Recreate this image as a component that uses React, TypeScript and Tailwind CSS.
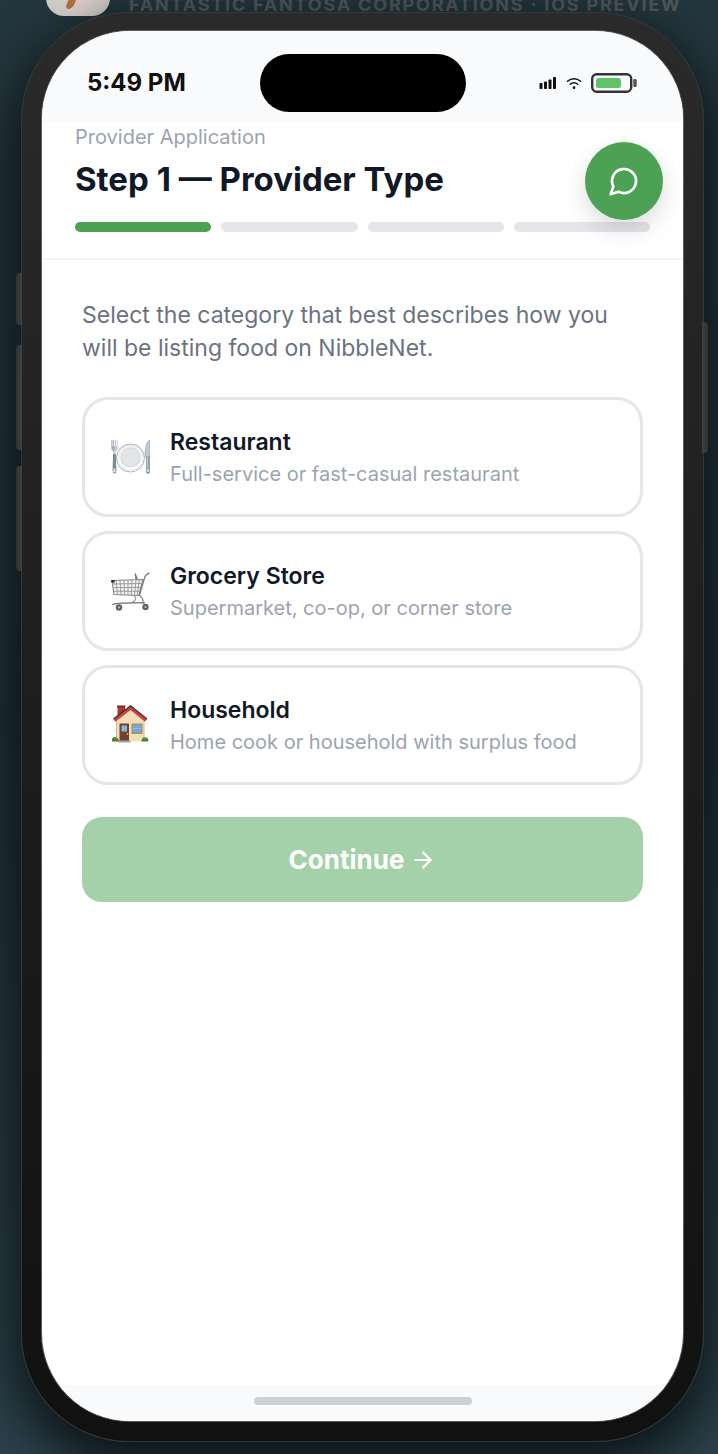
import React, { useState } from "react";
import { ArrowRight } from "lucide-react";

function PlateIcon() {
  return (
    <svg viewBox="0 0 40 40" className="size-10 shrink-0" aria-hidden="true">
      <defs>
        <linearGradient id="steel" x1="0" y1="0" x2="1" y2="1">
          <stop offset="0" stopColor="#7d858c" />
          <stop offset="0.5" stopColor="#c3d3e2" />
          <stop offset="1" stopColor="#6d747a" />
        </linearGradient>
        <linearGradient id="plate" x1="0" y1="0" x2="0" y2="1">
          <stop offset="0" stopColor="#f2f2f3" />
          <stop offset="1" stopColor="#fbfcfd" />
        </linearGradient>
      </defs>
      <circle cx="20.500" cy="21" r="14" fill="url(#plate)" stroke="#a9abae" strokeWidth="0.9" />
      <circle cx="20.500" cy="21" r="12.600" fill="none" stroke="#e3e5e8" strokeWidth="0.8" />
      <circle cx="20.500" cy="20.300" r="9.400" fill="#e4e5e6" stroke="#cfd2d5" strokeWidth="0.9" />
      <path d="M11.500 24a10 10 0 0 0 18 0" fill="none" stroke="#cbdcf0" strokeWidth="1.200" />
      <path d="M1.500 3.200h.9v6h.8v-6h.9v6h.8v-6h.9v6h.8v-6h.9v8.300c0 1.500-.9 2.300-1.900 2.800l.7 20.700c0 2-3.600 2-3.600 0l.7-20.700c-1-.5-1.900-1.300-1.900-2.800z" fill="url(#steel)" />
      <path d="M3 17h2.800l.5 17H2.600z" fill="#80878d" />
      <path d="M3.200 31.500h2.400v3.500H3.200z" fill="#c4daf4" />
      <path d="M39.800 3v32c0 2-3.600 2-3.600 0l.4-15.500h-1.400C34.800 12 36 5.500 39.800 3z" fill="#b9cbdd" stroke="#8f9aa4" strokeWidth="0.6" />
      <path d="M36.400 19.500h3.300V35c0 1.800-3.500 1.800-3.500 0z" fill="#939ba2" />
      <path d="M37.500 21v10" stroke="#cbd5de" strokeWidth="0.9" />
      <path d="M36.800 32h2.200v3h-2.200z" fill="#c4daf4" />
    </svg>
  );
}

function CartIcon() {
  return (
    <svg viewBox="0 0 40 40" className="size-10 shrink-0" fill="none" aria-hidden="true">
      <path d="M2 9.500 33 8.500 28.800 24.500 4 23.500z" fill="#f4f4f4" stroke="#858585" strokeWidth="1.100" />
      <path d="M6 9.400l1.500 14.200M10 9.200l1 14.400M14 9l.5 14.800M18 9v15M22 8.800l-.7 15.200M26 8.700l-1.500 15.500M29.500 8.600 27 24.400M2.500 13l29-.5M3 16.600l28-.2M3.500 20.200l26.500.1" stroke="#939393" strokeWidth="0.9" />
      <path d="M39.500 2.200c-2.600.6-4 2-4.700 4L29.500 24.500c2.500 1.300 4 3.500 3.500 8.300M26 8.500l-.8-6 2.200 6" stroke="#77797b" strokeWidth="1.200" />
      <path d="M22 24.200c5 1 4.800 5.300 0 7" stroke="#969696" strokeWidth="1.100" />
      <path d="M2 33.600c6-2.100 18-2.200 33-1.800" stroke="#858585" strokeWidth="1.500" />
      <path d="M1.200 9h3.400v2.600H1.200z" fill="#17354a" />
      <circle cx="9" cy="36.500" r="3.200" fill="#66605e" />
      <circle cx="9" cy="36.500" r="1.100" fill="#c2c0be" />
      <circle cx="35.500" cy="36" r="3.200" fill="#66605e" />
      <circle cx="35.500" cy="36" r="1.100" fill="#c2c0be" />
    </svg>
  );
}

function HouseIcon() {
  return (
    <svg viewBox="-1 2 40 40" className="size-10 shrink-0" aria-hidden="true">
      <path d="M6.500 3h7.500v9l-7.500 5z" fill="#a83a31" />
      <path d="M6 2.500h8.500v1.800H6z" fill="#7e2b26" />
      <path d="M5.500 17 19.500 5.500l13.500 11.500v21.500H5.500z" fill="#f0dfb9" />
      <path d="M5.500 17.500v21M33 17.500v21" stroke="#cdb98e" />
      <path d="M3.500 17.500 19.500 5l15.500 12.500" fill="none" stroke="#c8433c" strokeWidth="3.200" />
      <path d="M2.500 16 19.500 2.800 36 16" fill="none" stroke="#33302f" strokeWidth="1.200" />
      <path d="M8.500 20.500h9.500v18H8.500z" fill="#70422c" />
      <path d="M10.500 22.500h5.500v6h-5.500z" fill="#82b8e8" />
      <circle cx="16.500" cy="31" r="0.900" fill="#e3ae42" />
      <path d="M20.500 20.500h11v10.500h-11z" fill="#a88d68" />
      <path d="M22 22h8v7.500h-8z" fill="#6fa9df" />
      <path d="M22 25.500h8" stroke="#93c4ee" strokeWidth="0.800" />
      <path d="M7 37.500h12.500v2H7z" fill="#a7a096" />
      <path d="M1 38.500c-.6-3.800 2-5.200 4.200-4 2 0 2.600 2.300 2.300 4zM30.500 38.500c0-3.600 2-4.500 4-4 2.200-.3 3.300 2 2.800 4z" fill="#527d2b" />
      <path d="M3 36c1-1 2-1 3 0M32.500 36c1-1 2-1 3 0" stroke="#7ba345" fill="none" />
    </svg>
  );
}

const options = [
  { id: "restaurant", title: "Restaurant", detail: "Full-service or fast-casual restaurant", Icon: PlateIcon },
  { id: "grocery", title: "Grocery Store", detail: "Supermarket, co-op, or corner store", Icon: CartIcon },
  { id: "household", title: "Household", detail: "Home cook or household with surplus food", Icon: HouseIcon },
];

function PreviewHeader() {
  return (
    <header className="-mb-1 flex h-4 items-end gap-[19px] pl-[46px]">
      <svg viewBox="0 0 64 64" className="size-16 shrink-0 rounded-[18px]" aria-hidden="true">
        <defs>
          <linearGradient id="tile" x1="0" x2="1" y1="0" y2="0">
            <stop offset="0" stopColor="#cfcfc8" />
            <stop offset="0.5" stopColor="#e4d9d6" />
            <stop offset="1" stopColor="#cfcdc8" />
          </linearGradient>
        </defs>
        <path d="M0 0h64v64H0z" fill="url(#tile)" />
        <path d="M24 40h26c0 9-8 15-22 17z" fill="#e8d0d1" />
        <path d="M24 44l7 2-3 7c-2 4-8 6-8 1z" fill="#b87442" />
      </svg>
      <p className="shrink-0 text-[18px] leading-[22px] font-bold tracking-widest whitespace-nowrap text-[#51595d] uppercase">
        Fantastic Fantosa Corporations · iOS Preview
      </p>
    </header>
  );
}

function StatusBar() {
  return (
    <div className="grid h-[91px] shrink-0 grid-cols-[1fr_206px_1fr] items-center bg-[#f9fafc] pt-3">
      <time className="pl-[45px] text-[24px] leading-8 font-bold text-[#111]">5:49 PM</time>
      <div className="h-[58px] rounded-full bg-black" />
      <div className="flex items-center justify-end gap-[9px] pr-[46px]">
        <svg viewBox="0 0 18 14" className="h-[14px] w-[18px]" fill="#111" role="img" aria-label="Signal">
          <rect x="0.500" y="7" width="3" height="6" rx="0.800" />
          <rect x="5" y="5.500" width="3" height="7.500" rx="0.800" />
          <rect x="9.500" y="3.500" width="3" height="9.500" rx="0.800" />
          <rect x="14" y="1" width="3" height="12" rx="0.800" />
        </svg>
        <svg viewBox="0 0 16 14" className="h-[14px] w-4" fill="none" stroke="#111" strokeWidth="1.500" strokeLinecap="round" role="img" aria-label="Wi-Fi">
          <path d="M1.500 5.200a9.500 9.500 0 0 1 13 0M4.200 8.300a5.700 5.700 0 0 1 7.600 0" />
          <circle cx="8" cy="11.700" r="1.400" fill="#111" stroke="none" />
        </svg>
        <svg viewBox="0 0 46 20" className="h-5 w-[46px]" role="img" aria-label="Battery">
          <rect x="1.200" y="1.200" width="39" height="17.600" rx="4.500" fill="none" stroke="#333" strokeWidth="2.400" />
          <rect x="5" y="5" width="25" height="10" rx="2.500" fill="#5fc36a" />
          <rect x="42.300" y="6" width="3.400" height="8" rx="1.300" fill="#555" />
        </svg>
      </div>
    </div>
  );
}

export default function App() {
  const [selected, setSelected] = useState("");

  return (
    <div className="flex min-h-screen flex-col overflow-hidden bg-[linear-gradient(180deg,#24363e_0%,#1f3037_50%,#2b414b_100%)] pb-3 font-['Inter',sans-serif]">
      <PreviewHeader />
      <div className="relative mr-[14px] ml-[21px] flex flex-1 flex-col rounded-[108px] border border-[#30393d] bg-linear-to-b from-[#2a2a2a] to-[#111] px-[20px] pt-[18px] pb-[20px] shadow-[0_20px_56px_4px_rgba(0,0,0,0.75)]">
        <div className="absolute top-[260px] -left-[6px] h-[52px] w-[6px] rounded-l-[4px] bg-linear-to-r from-[#303030] to-[#414141]" />
        <div className="absolute top-[332px] -left-[6px] h-[105px] w-[6px] rounded-l-[4px] bg-linear-to-r from-[#303030] to-[#414141]" />
        <div className="absolute top-[453px] -left-[6px] h-[105px] w-[6px] rounded-l-[4px] bg-linear-to-r from-[#303030] to-[#414141]" />
        <div className="absolute top-[309px] -right-[5px] h-[131px] w-[6px] rounded-r-[4px] bg-linear-to-l from-[#303030] to-[#414141]" />

        <div className="relative flex flex-1 flex-col overflow-hidden rounded-[88px] bg-white ring-1 ring-[#5c5c5c]">
          <StatusBar />
          <header className="border-b-2 border-[#f3f4f6] px-[33px] pb-[26px]">
            <p className="pt-[2px] text-[20px] leading-[26px] text-[#9ca3af]">Provider Application</p>
            <h1 className="mt-2 text-[33px] leading-[42px] font-bold text-[#111827]">Step 1 — Provider Type</h1>
            <div className="mt-[22px] grid grid-cols-4 gap-[10px]" role="progressbar" aria-label="Application progress" aria-valuemin={0} aria-valuemax={4} aria-valuenow={1}>
              <div className="h-[10px] rounded-full bg-[#4ca154]" />
              <div className="h-[10px] rounded-full bg-[#e5e5ea]" />
              <div className="h-[10px] rounded-full bg-[#e5e5ea]" />
              <div className="h-[10px] rounded-full bg-[#e5e5ea]" />
            </div>
          </header>

          <button type="button" aria-label="Open chat" className="absolute top-[111px] right-[20px] flex size-[78px] items-center justify-center rounded-full bg-[#4ca154] text-white shadow-[0_10px_24px_rgba(0,0,0,0.14)]">
            <svg viewBox="0 0 24 24" className="size-8" fill="none" stroke="currentColor" strokeWidth="2" strokeLinecap="round" strokeLinejoin="round" aria-hidden="true">
              <path d="M7.900 20A9 9 0 1 0 4 16.100L2 22Z" />
            </svg>
          </button>

          <main className="flex-1 px-10 pt-[39px]">
            <p className="text-[23px] leading-[33px] text-[#6b7280]">Select the category that best describes how you will be listing food on NibbleNet.</p>
            <div className="mt-8 flex flex-col gap-[14px]">
              {options.map(({ id, title, detail, Icon }) => (
                <button key={id} type="button" aria-pressed={selected === id} onClick={() => setSelected(id)} className="flex h-[120px] items-center gap-5 rounded-[26px] border-3 border-[#e5e5ea] px-[25px] text-left">
                  <Icon />
                  <span className="flex flex-col gap-0.5">
                    <span className="text-[23px] leading-[32px] font-semibold text-[#111827]">{title}</span>
                    <span className="text-[20px] leading-[28px] text-[#9ca3af]">{detail}</span>
                  </span>
                </button>
              ))}
            </div>
            <button type="button" className="mt-8 flex h-[85px] w-full items-center justify-center gap-[6px] rounded-[20px] bg-[#a5d1aa] text-[26px] font-bold text-white">
              Continue
              <ArrowRight size={26} strokeWidth={2} />
            </button>
          </main>

          <footer className="flex h-9 items-center justify-center bg-[#f9fafc] pb-1">
            <div className="h-2 w-[218px] rounded-full bg-[#cfd0d2]" />
          </footer>
        </div>
      </div>
    </div>
  );
}
